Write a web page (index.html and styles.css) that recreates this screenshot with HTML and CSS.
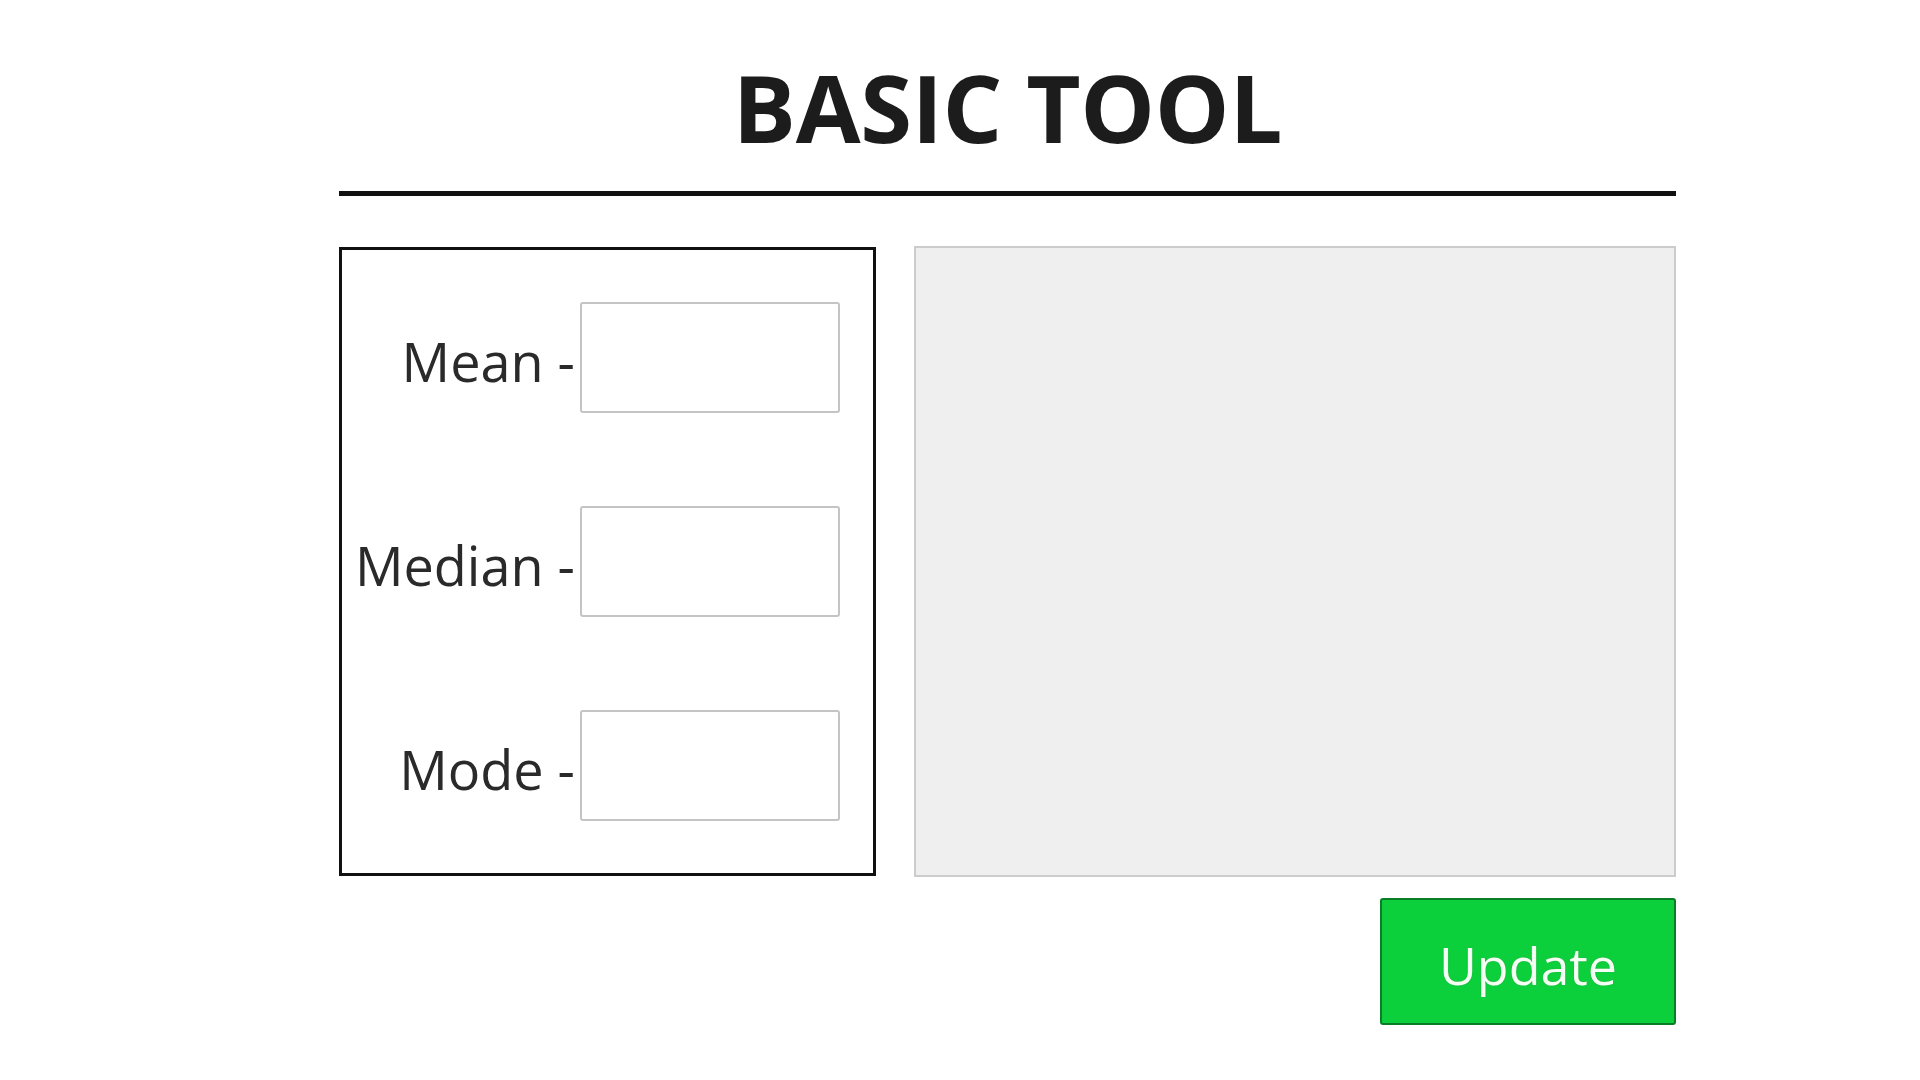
FILE: index.html
```html
<!DOCTYPE html>
<html lang="en">
<head>
<meta charset="utf-8">
<title>Basic Tool</title>
<link rel="stylesheet" href="styles.css">
</head>
<body>
<div class="page">
  <h1 class="title">BASIC TOOL</h1>
  <div class="rule"></div>
  <div class="main">
    <div class="stats">
      <label class="stat-label" for="mean">Mean -</label>
      <input class="stat-input" id="mean" type="text">
      <label class="stat-label" for="median">Median -</label>
      <input class="stat-input" id="median" type="text">
      <label class="stat-label" for="mode">Mode -</label>
      <input class="stat-input" id="mode" type="text">
    </div>
    <div class="canvas"></div>
  </div>
  <div class="actions">
    <button class="update" type="button">Update</button>
  </div>
</div>
</body>
</html>
```

FILE: styles.css
```css
html, body {
  margin: 0;
  padding: 0;
  background: #ffffff;
}

body {
  font-family: "Open Sans", "Noto Sans", sans-serif;
  color: #222222;
}

.page {
  width: 1337px;
  margin-left: 339px;
  padding-top: 47px;
}

.title {
  margin: 0;
  text-align: center;
  font-size: 94px;
  font-weight: 700;
  line-height: 120px;
  letter-spacing: -0.3px;
  color: #1c1c1c;
}

.rule {
  height: 5px;
  background: #111111;
  margin-top: 24px;
}

.main {
  display: flex;
  gap: 38px;
  margin-top: 51px;
}

.stats {
  box-sizing: border-box;
  width: 537px;
  height: 629px;
  border: 3px solid #111111;
  padding: 52px 33px 0 0;
  display: grid;
  grid-template-columns: 1fr 260px;
  grid-auto-rows: 111px;
  row-gap: 93px;
  column-gap: 5px;
  align-items: center;
}

.stat-label {
  text-align: right;
  font-size: 54px;
  font-weight: 400;
  line-height: 111px;
  color: #2a2a2a;
  white-space: nowrap;
  padding-top: 7px;
}

.stat-input {
  box-sizing: border-box;
  width: 260px;
  height: 111px;
  border: 2px solid #c4c4c4;
  border-radius: 3px;
  background: #ffffff;
  margin: 0;
  font-size: 40px;
}

.canvas {
  box-sizing: border-box;
  width: 762px;
  height: 631px;
  margin-top: -1px;
  border: 2px solid #cccccc;
  background: #efefef;
}

.actions {
  display: flex;
  justify-content: flex-end;
  margin-top: 21px;
}

.update {
  box-sizing: border-box;
  width: 296px;
  height: 127px;
  background: #0bd03c;
  border: 2px solid #0a7d26;
  border-radius: 3px;
  color: #f2fff2;
  font-family: "Open Sans", "Noto Sans", sans-serif;
  font-size: 52px;
  font-weight: 400;
  padding: 6px 0 0 0;
  text-shadow: 0 0 1px #2a8a3a;
}
```
